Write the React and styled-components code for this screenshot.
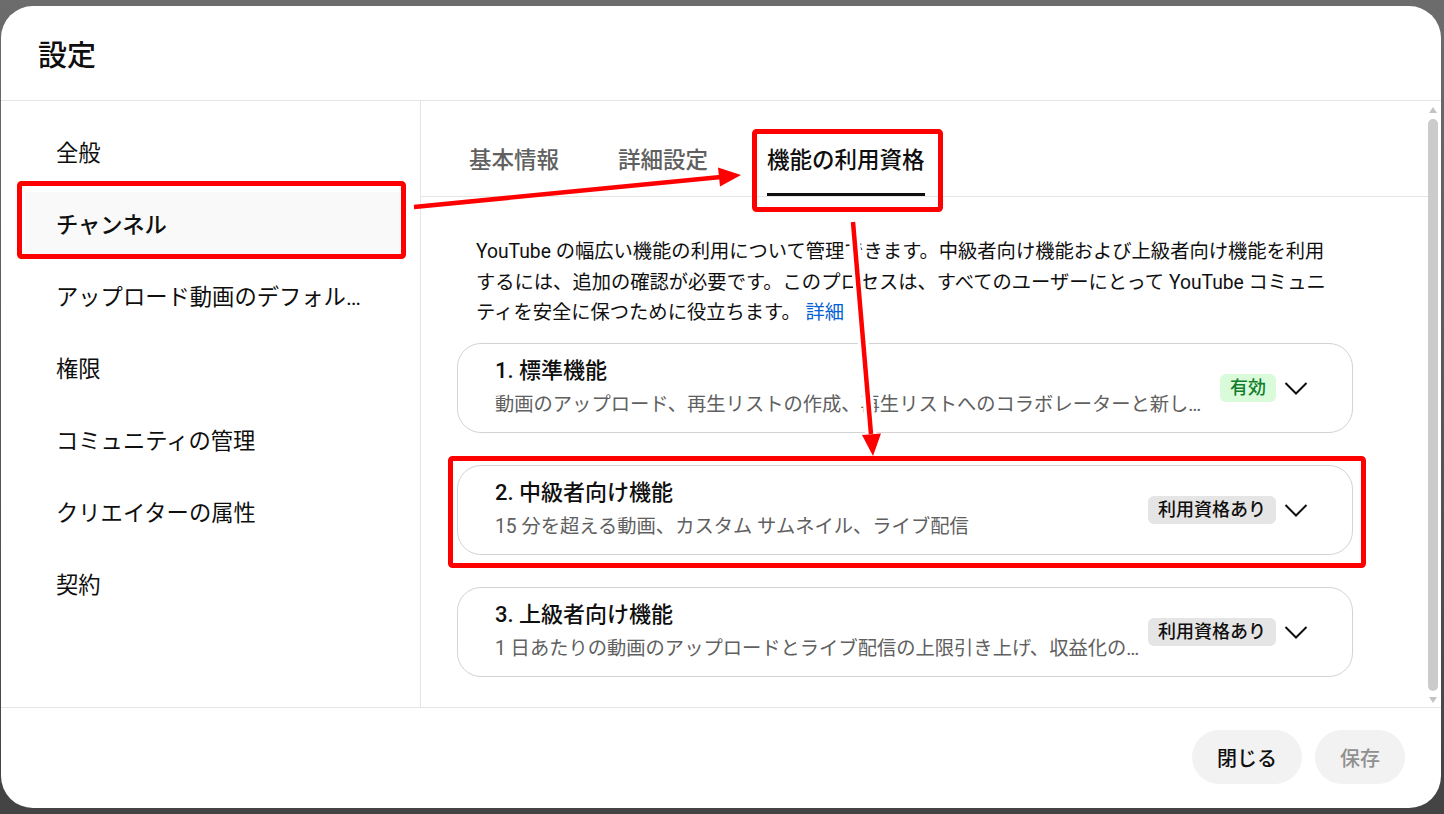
import React, { useState } from "react";
import styled, { createGlobalStyle } from "styled-components";

const GlobalStyle = createGlobalStyle`
  html, body {
    margin: 0;
    padding: 0;
  }
  body {
    background: linear-gradient(#6c6c6c, #434343);
    font-family: Roboto, "Noto Sans CJK JP", "Noto Sans", sans-serif;
    color: #0f0f0f;
  }
`;

const navItems = [
  "全般",
  "チャンネル",
  "アップロード動画のデフォルト設定",
  "権限",
  "コミュニティの管理",
  "クリエイターの属性",
  "契約",
];

const tabs = ["基本情報", "詳細設定", "機能の利用資格"];

const features = [
  {
    title: "1. 標準機能",
    desc: "動画のアップロード、再生リストの作成、再生リストへのコラボレーターと新しいメンバーの追加",
    badge: "有効",
    green: true,
  },
  {
    title: "2. 中級者向け機能",
    desc: "15 分を超える動画、カスタム サムネイル、ライブ配信",
    badge: "利用資格あり",
  },
  {
    title: "3. 上級者向け機能",
    desc: "1 日あたりの動画のアップロードとライブ配信の上限引き上げ、収益化の申請、外部リンク",
    badge: "利用資格あり",
  },
];

function Chevron() {
  return (
    <ChevronIcon viewBox="0 0 24 24" width="24" height="24">
      <path d="M1.5 7 L12 17.5 L22.5 7" fill="none" stroke="#0f0f0f" strokeWidth="2" />
    </ChevronIcon>
  );
}

function App() {
  const [activeNav, setActiveNav] = useState(1);
  const [activeTab, setActiveTab] = useState(2);

  return (
    <Backdrop>
      <GlobalStyle />
      <Dialog>
        <Header>
          <Title>設定</Title>
        </Header>
        <Body>
          <Nav>
            {navItems.map((item, i) => (
              <NavItem
                key={item}
                $active={i === activeNav}
                onClick={() => setActiveNav(i)}
              >
                {item}
              </NavItem>
            ))}
          </Nav>
          <Panel>
            <ScrollArea>
              <Tabs>
                {tabs.map((t, i) => (
                  <Tab
                    key={t}
                    $active={i === activeTab}
                    onClick={() => setActiveTab(i)}
                  >
                    {t}
                  </Tab>
                ))}
              </Tabs>
              <Content>
                <Description>
                  YouTube の幅広い機能の利用について管理できます。中級者向け機能および上級者向け機能を利用するには、追加の確認が必要です。このプロセスは、すべてのユーザーにとって YouTube コミュニティを安全に保つために役立ちます。{" "}
                  <Link href="#">詳細</Link>
                </Description>
                <CardList>
                  {features.map((f) => (
                    <Card key={f.title}>
                      <CardText>
                        <CardTitle>{f.title}</CardTitle>
                        <CardDesc>{f.desc}</CardDesc>
                      </CardText>
                      <Badge $green={f.green}>{f.badge}</Badge>
                      <Chevron />
                    </Card>
                  ))}
                </CardList>
              </Content>
            </ScrollArea>
            <Scrollbar>
              <ArrowUp />
              <Thumb />
              <ArrowDown />
            </Scrollbar>
          </Panel>
        </Body>
        <Footer>
          <Button>閉じる</Button>
          <Button $disabled>保存</Button>
        </Footer>
      </Dialog>

      {/* red annotations drawn over the screenshot */}
      <Overlay viewBox="0 0 1444 814" width="1444" height="814">
        <g fill="none" stroke="#ff0000" strokeWidth="5">
          <rect x="19.5" y="183.5" width="384" height="73" rx="2" />
          <rect x="754.5" y="131.5" width="186" height="78" rx="2" />
          <rect x="450.5" y="458.5" width="913" height="107" rx="2" />
        </g>
        <line x1="414" y1="207" x2="721" y2="177" stroke="#ff0000" strokeWidth="4.5" />
        <polygon points="741,175 720,186.5 718,167.5" fill="#ff0000" />
        <line x1="853" y1="222" x2="871" y2="434" stroke="#ffffff" strokeWidth="11" />
        <line x1="853" y1="222" x2="871" y2="434" stroke="#ff0000" strokeWidth="4.5" />
        <polygon points="873,456 881,433.5 862,435" fill="#ff0000" />
      </Overlay>
    </Backdrop>
  );
}

const Backdrop = styled.div`
  box-sizing: border-box;
  height: 814px;
  padding: 6px 3px 6px 1px;
  display: flex;
`;

const Dialog = styled.div`
  flex: 1;
  display: flex;
  flex-direction: column;
  background: #ffffff;
  border-radius: 32px;
  overflow: hidden;
`;

const Header = styled.div`
  box-sizing: border-box;
  height: 95px;
  flex-shrink: 0;
  display: flex;
  align-items: center;
  padding: 0 37px 0;
  border-bottom: 1px solid #e5e5e5;
`;

const Title = styled.h1`
  margin: 0;
  font-size: 29px;
  font-weight: 500;
  color: #0f0f0f;
`;

const Body = styled.div`
  flex: 1;
  display: flex;
  min-height: 0;
`;

const Nav = styled.div`
  box-sizing: border-box;
  width: 420px;
  flex-shrink: 0;
  border-right: 1px solid #e5e5e5;
  padding: 19px 20px 0 24px;
  display: flex;
  flex-direction: column;
  gap: 6px;
`;

const NavItem = styled.div`
  display: block;
  height: 66px;
  line-height: 66px;
  padding: 0 27px 0 31px;
  font-size: 22.3px;
  font-weight: ${(p) => (p.$active ? 500 : 400)};
  background: ${(p) => (p.$active ? "#f9f9f9" : "transparent")};
  white-space: nowrap;
  overflow: hidden;
  text-overflow: ellipsis;
  cursor: pointer;
`;

const Panel = styled.div`
  flex: 1;
  display: flex;
  min-width: 0;
`;

const ScrollArea = styled.div`
  flex: 1;
  display: flex;
  flex-direction: column;
  min-width: 0;
`;

const Tabs = styled.div`
  display: flex;
  gap: 59px;
  padding-left: 48px;
  border-bottom: 1px solid #e5e5e5;
`;

const Tab = styled.div`
  box-sizing: border-box;
  height: 95px;
  padding-top: 44px;
  line-height: 30px;
  font-size: 22.5px;
  font-weight: 500;
  color: ${(p) => (p.$active ? "#0f0f0f" : "#606060")};
  border-bottom: 3px solid ${(p) => (p.$active ? "#0f0f0f" : "transparent")};
  cursor: pointer;
`;

const Content = styled.div`
  width: 896px;
  padding: 40px 0 0 36px;
`;

const Description = styled.p`
  margin: 0;
  width: 866px;
  padding-left: 19px;
  font-size: 19.3px;
  line-height: 30.5px;
  color: #0f0f0f;
`;

const Link = styled.a`
  color: #065fd4;
  text-decoration: none;
`;

const CardList = styled.div`
  display: flex;
  flex-direction: column;
  gap: 32px;
  margin-top: 14px;
`;

const Card = styled.div`
  box-sizing: border-box;
  height: 90px;
  display: flex;
  align-items: center;
  padding: 0 44px 0 37px;
  border: 1px solid #d3d3d3;
  border-radius: 24px;
`;

const CardText = styled.div`
  flex: 1;
  min-width: 0;
  display: flex;
  flex-direction: column;
  gap: 4px;
  margin-right: 4px;
`;

const CardTitle = styled.div`
  font-size: 22px;
  font-weight: 500;
  line-height: 30px;
  color: #0f0f0f;
`;

const CardDesc = styled.div`
  font-size: 19.3px;
  line-height: 30px;
  color: #606060;
  white-space: nowrap;
  overflow: hidden;
  text-overflow: ellipsis;
`;

const Badge = styled.span`
  flex-shrink: 0;
  height: 28px;
  line-height: 28px;
  padding: 0 10px;
  border-radius: 6px;
  font-size: 18px;
  font-weight: 500;
  background: ${(p) => (p.$green ? "#d9fbd9" : "#e5e5e5")};
  color: ${(p) => (p.$green ? "#107c2e" : "#0f0f0f")};
`;

const ChevronIcon = styled.svg`
  flex-shrink: 0;
  margin-left: 8px;
`;

const Scrollbar = styled.div`
  width: 10px;
  flex-shrink: 0;
  margin: 6px 3px 4px 0;
  display: flex;
  flex-direction: column;
  align-items: center;
  gap: 6px;
`;

const ArrowUp = styled.div`
  width: 0;
  height: 0;
  border-left: 4px solid transparent;
  border-right: 4px solid transparent;
  border-bottom: 6px solid #c4c4c4;
`;

const ArrowDown = styled.div`
  width: 0;
  height: 0;
  border-left: 4px solid transparent;
  border-right: 4px solid transparent;
  border-top: 6px solid #c4c4c4;
`;

const Thumb = styled.div`
  flex: 1;
  width: 10px;
  background: #cbcbcb;
  border-radius: 5px;
`;

const Footer = styled.div`
  box-sizing: border-box;
  height: 101px;
  flex-shrink: 0;
  border-top: 1px solid #e5e5e5;
  display: flex;
  align-items: center;
  justify-content: flex-end;
  gap: 13px;
  padding: 0 36px 2px 0;
`;

const Button = styled.button`
  height: 54px;
  padding: 0 25px;
  border: none;
  border-radius: 27px;
  background: #f2f2f2;
  font-family: Roboto, "Noto Sans CJK JP", sans-serif;
  font-size: 20px;
  font-weight: 500;
  color: ${(p) => (p.$disabled ? "#909090" : "#0f0f0f")};
  cursor: ${(p) => (p.$disabled ? "default" : "pointer")};
`;

const Overlay = styled.svg`
  position: fixed;
  top: 0;
  left: 0;
  pointer-events: none;
`;

export default App;
